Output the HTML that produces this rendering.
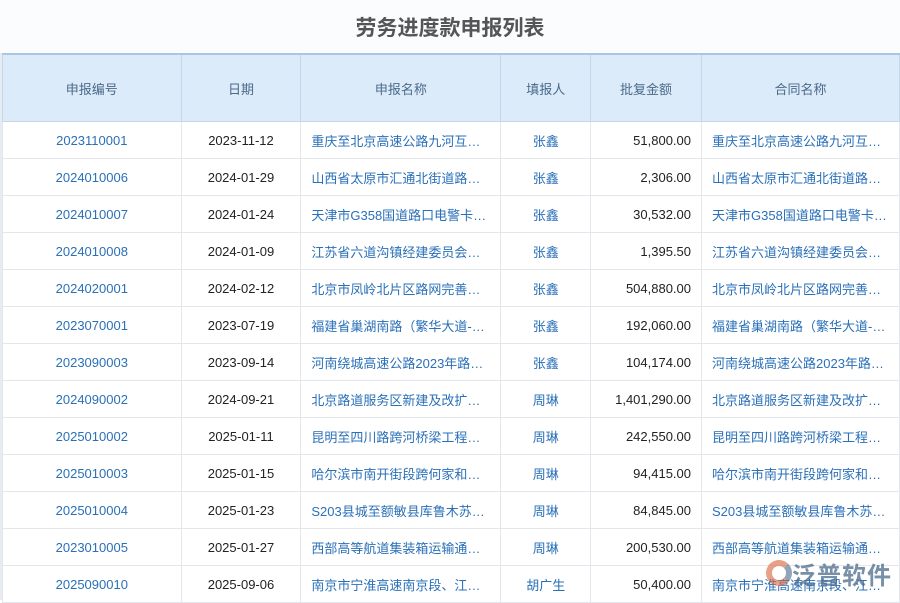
<!DOCTYPE html>
<html><head><meta charset="utf-8"><style>
body{margin:0;width:900px;height:600px;overflow:hidden;background:#fff;font-family:"Liberation Sans","Noto Sans CJK SC",sans-serif;}
.title{position:absolute;left:0;top:0;width:900px;height:53px;background:#fbfcfe;text-align:center;font-size:21px;font-weight:bold;color:#555;line-height:58px;}
table{position:absolute;left:2px;top:53px;border-collapse:collapse;table-layout:fixed;font-size:13px;}
th{height:66px;padding:0;background:#dcebf9;color:#4a6a8a;font-weight:normal;border:1px solid #c4d8ea;border-top:2px solid #a9c6e3;}
td{height:36px;padding:0;border:1px solid #e3e7ec;color:#222;text-align:center;white-space:nowrap;overflow:hidden;}
td.b{color:#2a70b8;}
td.l{text-align:left;padding-left:10px;color:#2a70b8;}
td.r{text-align:right;padding-right:10px;}
.edge{position:absolute;left:0;top:53px;width:2px;height:547px;background:#e7ecf2;}
.wm{position:absolute;left:792px;top:556px;font-size:24px;color:#4a6a8a;opacity:.75;font-weight:bold;letter-spacing:1px}
.wmi{position:absolute;left:766px;top:560px;width:26px;height:26px;border-radius:50%;border:6px solid #d8643a;border-right-color:#4a6a8a;opacity:.6;box-sizing:border-box}
</style></head><body>
<div class="title">劳务进度款申报列表</div>
<div class="edge"></div>
<table>
<colgroup><col style="width:179px"><col style="width:120px"><col style="width:200px"><col style="width:90px"><col style="width:111px"><col style="width:198px"></colgroup>
<tr><th>申报编号</th><th>日期</th><th>申报名称</th><th>填报人</th><th>批复金额</th><th>合同名称</th></tr>
<tr><td class="b">2023110001</td><td>2023-11-12</td><td class="l">重庆至北京高速公路九河互…</td><td class="b">张鑫</td><td class="r">51,800.00</td><td class="l">重庆至北京高速公路九河互…</td></tr>
<tr><td class="b">2024010006</td><td>2024-01-29</td><td class="l">山西省太原市汇通北街道路…</td><td class="b">张鑫</td><td class="r">2,306.00</td><td class="l">山西省太原市汇通北街道路…</td></tr>
<tr><td class="b">2024010007</td><td>2024-01-24</td><td class="l">天津市G358国道路口电警卡…</td><td class="b">张鑫</td><td class="r">30,532.00</td><td class="l">天津市G358国道路口电警卡…</td></tr>
<tr><td class="b">2024010008</td><td>2024-01-09</td><td class="l">江苏省六道沟镇经建委员会…</td><td class="b">张鑫</td><td class="r">1,395.50</td><td class="l">江苏省六道沟镇经建委员会…</td></tr>
<tr><td class="b">2024020001</td><td>2024-02-12</td><td class="l">北京市凤岭北片区路网完善…</td><td class="b">张鑫</td><td class="r">504,880.00</td><td class="l">北京市凤岭北片区路网完善…</td></tr>
<tr><td class="b">2023070001</td><td>2023-07-19</td><td class="l">福建省巢湖南路（繁华大道-…</td><td class="b">张鑫</td><td class="r">192,060.00</td><td class="l">福建省巢湖南路（繁华大道-…</td></tr>
<tr><td class="b">2023090003</td><td>2023-09-14</td><td class="l">河南绕城高速公路2023年路…</td><td class="b">张鑫</td><td class="r">104,174.00</td><td class="l">河南绕城高速公路2023年路…</td></tr>
<tr><td class="b">2024090002</td><td>2024-09-21</td><td class="l">北京路道服务区新建及改扩…</td><td class="b">周琳</td><td class="r">1,401,290.00</td><td class="l">北京路道服务区新建及改扩…</td></tr>
<tr><td class="b">2025010002</td><td>2025-01-11</td><td class="l">昆明至四川路跨河桥梁工程…</td><td class="b">周琳</td><td class="r">242,550.00</td><td class="l">昆明至四川路跨河桥梁工程…</td></tr>
<tr><td class="b">2025010003</td><td>2025-01-15</td><td class="l">哈尔滨市南开街段跨何家和…</td><td class="b">周琳</td><td class="r">94,415.00</td><td class="l">哈尔滨市南开街段跨何家和…</td></tr>
<tr><td class="b">2025010004</td><td>2025-01-23</td><td class="l">S203县城至额敏县库鲁木苏…</td><td class="b">周琳</td><td class="r">84,845.00</td><td class="l">S203县城至额敏县库鲁木苏…</td></tr>
<tr><td class="b">2023010005</td><td>2025-01-27</td><td class="l">西部高等航道集装箱运输通…</td><td class="b">周琳</td><td class="r">200,530.00</td><td class="l">西部高等航道集装箱运输通…</td></tr>
<tr><td class="b">2025090010</td><td>2025-09-06</td><td class="l">南京市宁淮高速南京段、江…</td><td class="b">胡广生</td><td class="r">50,400.00</td><td class="l">南京市宁淮高速南京段、江…</td></tr>
</table>
<div class="wmi"></div><div class="wm">泛普软件</div>
</body></html>
